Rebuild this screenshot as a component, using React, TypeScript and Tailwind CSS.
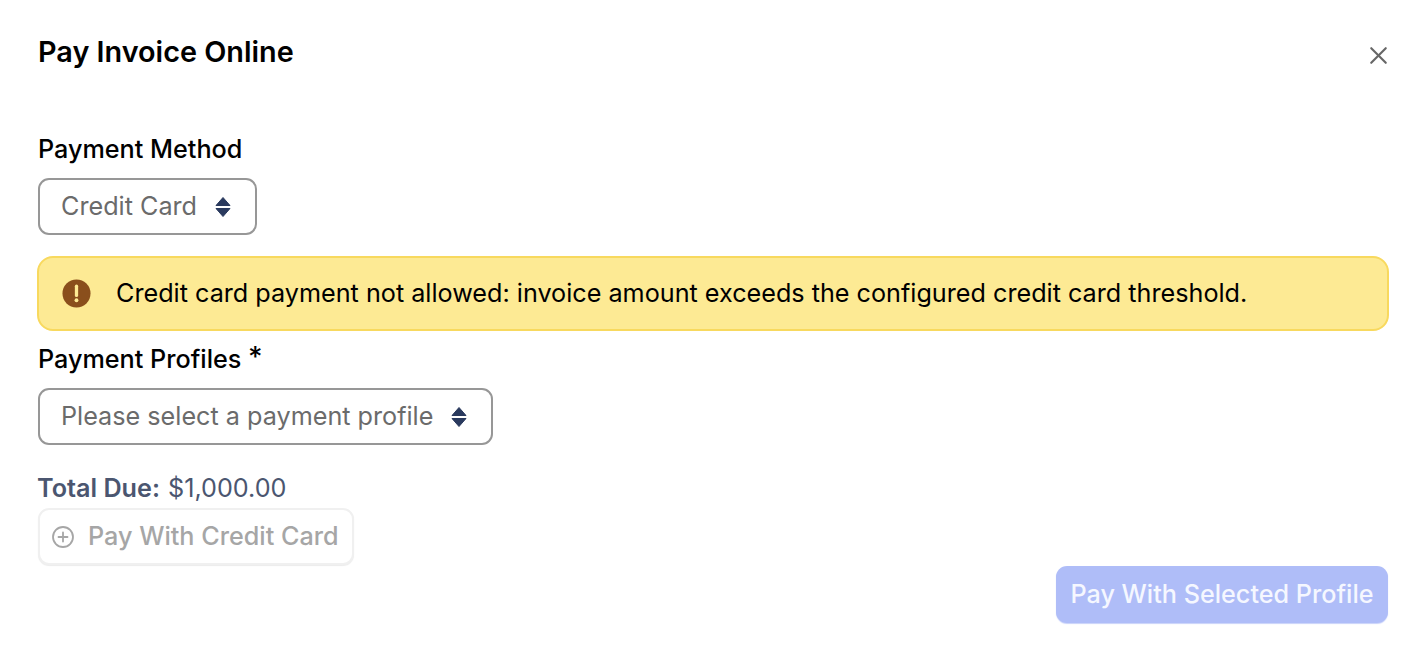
import { X } from 'lucide-react';

function Sort() {
  return (
    <svg width="16" height="22" viewBox="0 0 16 22" className="shrink-0">
      <path d="M8 1.5 15 9.5H1Z M8 20.5 1 12.5H15Z" fill="#2a3a5e" stroke="#2a3a5e" strokeLinejoin="round" strokeWidth="1" />
    </svg>
  );
}

function SelectBox({ label, width }: { label: string; width: string }) {
  return (
    <div className={`flex h-[57px] items-center justify-between rounded-[11px] border-2 border-[#979797] bg-white pl-[21px] pr-[24px] ${width}`}>
      <span className="text-[25.2px] text-[#6b6b6b]">{label}</span>
      <Sort />
    </div>
  );
}

export default function App() {
  return (
    <div className="flex h-[659px] w-[1420px] flex-col overflow-hidden bg-white pl-[37px] pr-[31px] font-['Inter',sans-serif] text-black">
      <div className="flex items-start justify-between pt-[34px]">
        <h1 className="pl-px text-[28.8px] leading-[36px] font-semibold">Pay Invoice Online</h1>
        <X size={29} strokeWidth={1.8} className="mt-[7px] mr-[-4px] text-[#666666]" />
      </div>

      <label className="mt-[62px] pl-px text-[25.2px] leading-[34px] font-medium">Payment Method</label>
      <div className="mt-[12px] pl-px">
        <SelectBox label="Credit Card" width="w-[219px]" />
      </div>

      <div className="mt-[21px] flex h-[75px] items-center gap-[25px] rounded-[16px] border-2 border-[#f8d95e] bg-[#fdea94] pl-[23px]">
        <svg width="29" height="29" viewBox="0 0 30 30" className="shrink-0">
          <circle cx="15" cy="15" r="14.5" fill="#8a4f1c" />
          <path d="M15 7.5V17" stroke="#fdea94" strokeWidth="3.4" strokeLinecap="round" />
          <circle cx="15" cy="22" r="2" fill="#fdea94" />
        </svg>
        <span className="text-[25.2px] whitespace-nowrap">Credit card payment not allowed: invoice amount exceeds the configured credit card threshold.</span>
      </div>

      <label className="mt-[10px] pl-px text-[25.2px] leading-[34px] font-medium">
        Payment Profiles <span className="relative top-[-1px] text-[28px]">*</span>
      </label>
      <div className="mt-[12px] pl-px">
        <SelectBox label="Please select a payment profile" width="w-[455px]" />
      </div>

      <div className="mt-[26px] pl-px text-[25.2px] leading-[34px] text-[#4b5670]">
        <span className="ml-[-1px] font-semibold">Total Due:</span> <span className="ml-px">$1,000.00</span>
      </div>

      <div className="mt-[3px] pl-px">
        <button className="flex h-[57px] w-[316px] items-center gap-[13px] rounded-[11px] border-2 border-[#f0f0f0] bg-white pl-[11px] pt-px text-[25.2px] font-medium whitespace-nowrap text-[#a6a6a6] shadow-[0_1px_1px_#ececec]">
          <svg width="24" height="24" viewBox="0 0 24 24" fill="none" stroke="#a6a6a6" strokeWidth="1.8" strokeLinecap="round" className="shrink-0">
            <circle cx="12" cy="12" r="10" />
            <path d="M12 7.5v9M7.5 12h9" />
          </svg>
          Pay With Credit Card
        </button>
      </div>

      <div className="mt-px mr-px flex justify-end">
        <button className="flex h-[57px] w-[332px] items-center justify-center rounded-[11px] bg-[#afbdf8] pt-px text-[25.2px] font-medium whitespace-nowrap text-[#f5f7ff] shadow-[0_1px_1px_#c8d2fa]">
          Pay With Selected Profile
        </button>
      </div>
    </div>
  );
}
